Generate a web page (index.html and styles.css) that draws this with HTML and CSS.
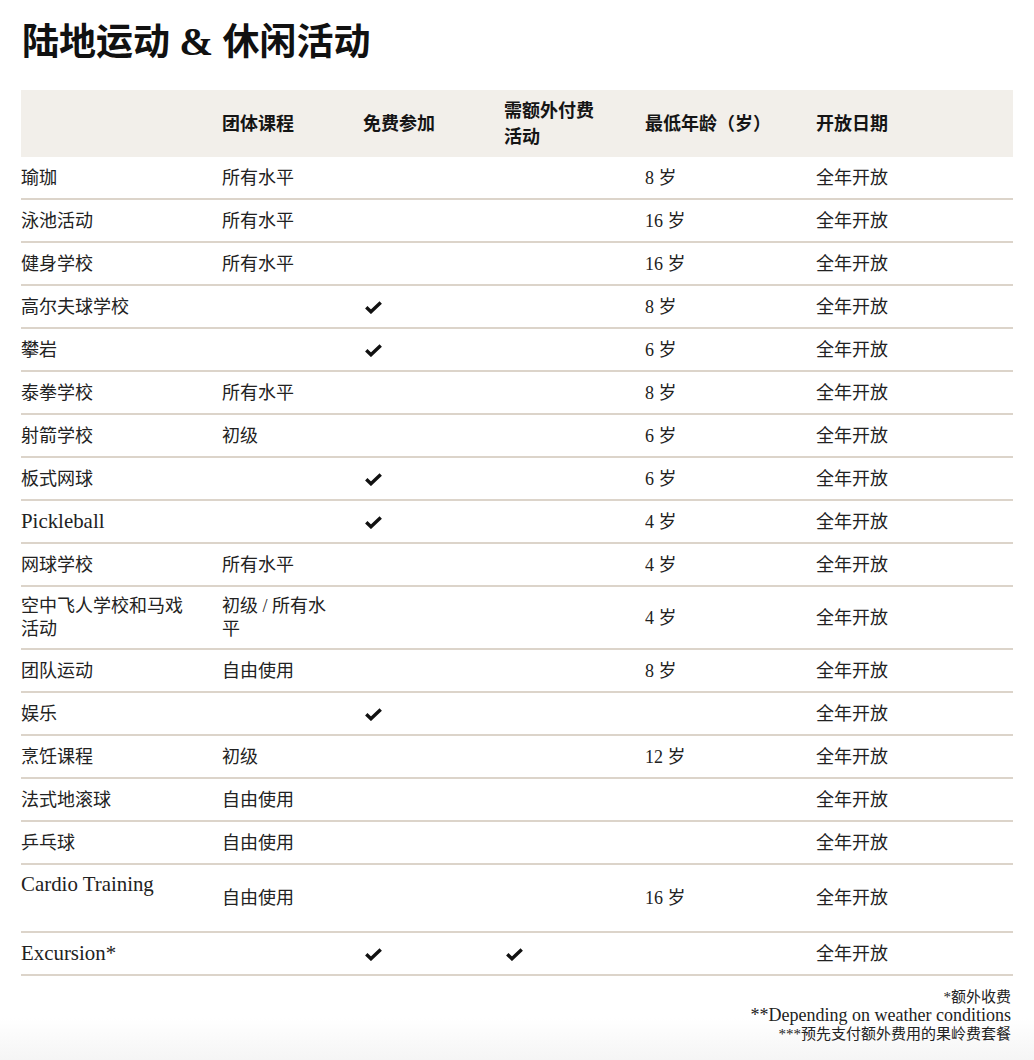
FILE: index.html
```html
<!DOCTYPE html>
<html lang="zh">
<head>
<meta charset="utf-8">
<title>陆地运动 &amp; 休闲活动</title>
<link rel="stylesheet" href="styles.css">
</head>
<body>
<main class="page">
  <h1 class="title">陆地运动 <span class="amp">&amp;</span> 休闲活动</h1>
  <table class="activities">
    <colgroup>
      <col class="c1"><col class="c2"><col class="c3"><col class="c4"><col class="c5"><col class="c6">
    </colgroup>
    <thead>
      <tr>
        <th></th>
        <th>团体课程</th>
        <th>免费参加</th>
        <th>需额外付费活动</th>
        <th>最低年龄（岁）</th>
        <th>开放日期</th>
      </tr>
    </thead>
    <tbody>
      <tr><td>瑜珈</td><td>所有水平</td><td></td><td></td><td>8 岁</td><td>全年开放</td></tr>
      <tr><td>泳池活动</td><td>所有水平</td><td></td><td></td><td>16 岁</td><td>全年开放</td></tr>
      <tr><td>健身学校</td><td>所有水平</td><td></td><td></td><td>16 岁</td><td>全年开放</td></tr>
      <tr><td>高尔夫球学校</td><td></td><td><svg class="check" viewBox="0 0 16 12"><path d="M1.2 5.8 L5.6 10 L14.8 1.2"/></svg></td><td></td><td>8 岁</td><td>全年开放</td></tr>
      <tr><td>攀岩</td><td></td><td><svg class="check" viewBox="0 0 16 12"><path d="M1.2 5.8 L5.6 10 L14.8 1.2"/></svg></td><td></td><td>6 岁</td><td>全年开放</td></tr>
      <tr><td>泰拳学校</td><td>所有水平</td><td></td><td></td><td>8 岁</td><td>全年开放</td></tr>
      <tr><td>射箭学校</td><td>初级</td><td></td><td></td><td>6 岁</td><td>全年开放</td></tr>
      <tr><td>板式网球</td><td></td><td><svg class="check" viewBox="0 0 16 12"><path d="M1.2 5.8 L5.6 10 L14.8 1.2"/></svg></td><td></td><td>6 岁</td><td>全年开放</td></tr>
      <tr><td><span class="lat">Pickleball</span></td><td></td><td><svg class="check" viewBox="0 0 16 12"><path d="M1.2 5.8 L5.6 10 L14.8 1.2"/></svg></td><td></td><td>4 岁</td><td>全年开放</td></tr>
      <tr><td>网球学校</td><td>所有水平</td><td></td><td></td><td>4 岁</td><td>全年开放</td></tr>
      <tr><td>空中飞人学校和马戏活动</td><td>初级 / 所有水平</td><td></td><td></td><td>4 岁</td><td>全年开放</td></tr>
      <tr><td>团队运动</td><td>自由使用</td><td></td><td></td><td>8 岁</td><td>全年开放</td></tr>
      <tr><td>娱乐</td><td></td><td><svg class="check" viewBox="0 0 16 12"><path d="M1.2 5.8 L5.6 10 L14.8 1.2"/></svg></td><td></td><td></td><td>全年开放</td></tr>
      <tr><td>烹饪课程</td><td>初级</td><td></td><td></td><td>12 岁</td><td>全年开放</td></tr>
      <tr><td>法式地滚球</td><td>自由使用</td><td></td><td></td><td></td><td>全年开放</td></tr>
      <tr><td>乒乓球</td><td>自由使用</td><td></td><td></td><td></td><td>全年开放</td></tr>
      <tr class="tall"><td class="top"><span class="lat">Cardio Training</span></td><td>自由使用</td><td></td><td></td><td>16 岁</td><td>全年开放</td></tr>
      <tr><td><span class="lat">Excursion*</span></td><td></td><td><svg class="check" viewBox="0 0 16 12"><path d="M1.2 5.8 L5.6 10 L14.8 1.2"/></svg></td><td><svg class="check" viewBox="0 0 16 12"><path d="M1.2 5.8 L5.6 10 L14.8 1.2"/></svg></td><td></td><td>全年开放</td></tr>
    </tbody>
  </table>
  <div class="notes">
    <p>*额外收费</p>
    <p><span class="lat">**Depending on weather conditions</span></p>
    <p>***预先支付额外费用的果岭费套餐</p>
  </div>
</main>
</body>
</html>
```

FILE: styles.css
```css
html {
  background: linear-gradient(to bottom, #ffffff 0, #ffffff 1018px, #f5f5f5 1060px) no-repeat;
  min-height: 1060px;
}
body {
  margin: 0;
  font-family: "Liberation Serif", "Noto Sans CJK SC", serif;
  color: #1c1c1c;
}
.page {
  padding: 21px 21px 0 21px;
}
.title {
  margin: 0 0 26px 1px;
  font-size: 37px;
  line-height: 43px;
  font-weight: 700;
  color: #111;
}
.title .amp {
  font-size: 1.1em;
  line-height: 1;
}
.activities {
  width: 992px;
  table-layout: fixed;
  border-collapse: separate;
  border-spacing: 0;
  font-size: 18px;
}
.c1 { width: 201px; }
.c2 { width: 141px; }
.c3 { width: 141px; }
.c4 { width: 141px; }
.c5 { width: 171px; }
.c6 { width: 197px; }
.activities thead th {
  background: #f2efea;
  height: 67px;
  padding: 6px 36px 6px 0;
  box-sizing: border-box;
  text-align: left;
  font-weight: 700;
  line-height: 26px;
  vertical-align: middle;
  color: #151515;
}
.activities tbody tr {
  height: 43px;
}
.activities tbody td {
  padding: 8px 25px 7px 0;
  line-height: 23px;
  vertical-align: middle;
  border-bottom: 2px solid #dcd4ca;
  color: #222;
}
.activities tbody tr.tall {
  height: 68px;
}
.activities tbody td.top {
  vertical-align: top;
  padding-top: 9px;
}
.lat {
  font-size: 1.16em;
  line-height: 1;
}
.check {
  display: block;
  width: 17px;
  height: 13px;
  margin-left: 2px;
  fill: none;
  stroke: #111;
  stroke-width: 3.2;
  stroke-linejoin: miter;
}
.notes {
  margin-top: 12px;
  text-align: right;
  font-size: 15px;
  line-height: 18px;
  padding-right: 2px;
  color: #222;
}
.notes p {
  margin: 0;
}
.notes .lat {
  font-size: 1.2em;
}
```
